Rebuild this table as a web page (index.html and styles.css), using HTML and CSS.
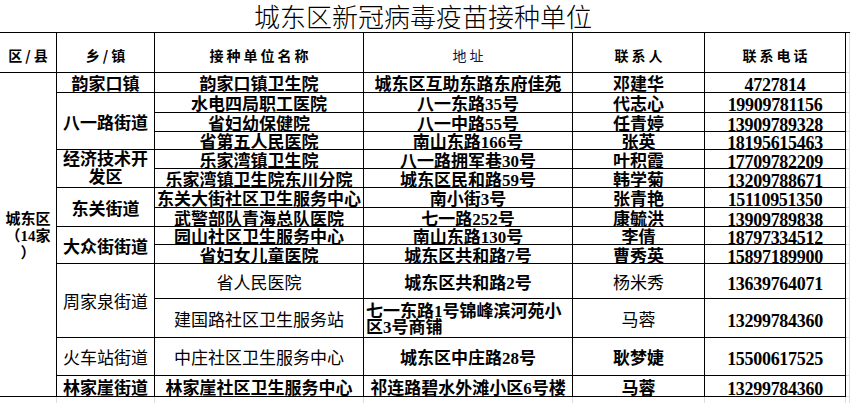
FILE: index.html
```html
<!DOCTYPE html>
<html lang="zh-CN">
<head>
<meta charset="utf-8">
<title>城东区新冠病毒疫苗接种单位</title>
<link rel="stylesheet" href="styles.css">
</head>
<body>
<div class="sheet">
  <div class="title"><span class="title-text">城东区新冠病毒疫苗接种单位</span></div>
  <div class="grid">
    <div class="c h">区/县</div>
    <div class="c h">乡/镇</div>
    <div class="c h">接种单位名称</div>
    <div class="c h hl">地址</div>
    <div class="c h">联系人</div>
    <div class="c h">联系电话</div>
    <div class="g"></div>

    <div class="c dist">城东区<br>（14家<br>）</div>

    <div class="c">韵家口镇</div>
    <div class="c">韵家口镇卫生院</div>
    <div class="c">城东区互助东路东府佳苑</div>
    <div class="c">邓建华</div>
    <div class="c ph">4727814</div>
    <div class="g"></div>

    <div class="c span3">八一路街道</div>
    <div class="c">水电四局职工医院</div>
    <div class="c">八一东路35号</div>
    <div class="c">代志心</div>
    <div class="c ph">19909781156</div>
    <div class="g"></div>

    <div class="c">省妇幼保健院</div>
    <div class="c">八一中路55号</div>
    <div class="c">任青婷</div>
    <div class="c ph">13909789328</div>
    <div class="g"></div>

    <div class="c">省第五人民医院</div>
    <div class="c">南山东路166号</div>
    <div class="c">张英</div>
    <div class="c ph">18195615463</div>
    <div class="g"></div>

    <div class="c span2 wrap2">经济技术开<br>发区</div>
    <div class="c">乐家湾镇卫生院</div>
    <div class="c">八一路拥军巷30号</div>
    <div class="c">叶积霞</div>
    <div class="c ph">17709782209</div>
    <div class="g"></div>

    <div class="c">乐家湾镇卫生院东川分院</div>
    <div class="c">城东区民和路59号</div>
    <div class="c">韩学菊</div>
    <div class="c ph">13209788671</div>
    <div class="g"></div>

    <div class="c span2">东关街道</div>
    <div class="c">东关大街社区卫生服务中心</div>
    <div class="c">南小街3号</div>
    <div class="c">张青艳</div>
    <div class="c ph">15110951350</div>
    <div class="g"></div>

    <div class="c">武警部队青海总队医院</div>
    <div class="c">七一路252号</div>
    <div class="c">康毓洪</div>
    <div class="c ph">13909789838</div>
    <div class="g"></div>

    <div class="c span2">大众街街道</div>
    <div class="c">园山社区卫生服务中心</div>
    <div class="c">南山东路130号</div>
    <div class="c">李倩</div>
    <div class="c ph">18797334512</div>
    <div class="g"></div>

    <div class="c">省妇女儿童医院</div>
    <div class="c">城东区共和路7号</div>
    <div class="c">曹秀英</div>
    <div class="c ph">15897189900</div>
    <div class="g"></div>

    <div class="c span2 lt">周家泉街道</div>
    <div class="c lt">省人民医院</div>
    <div class="c">城东区共和路2号</div>
    <div class="c lt">杨米秀</div>
    <div class="c ph">13639764071</div>
    <div class="g"></div>

    <div class="c lt">建国路社区卫生服务站</div>
    <div class="c wrapl">七一东路1号锦峰滨河苑小区3号商铺</div>
    <div class="c lt">马蓉</div>
    <div class="c ph">13299784360</div>
    <div class="g"></div>

    <div class="c lt">火车站街道</div>
    <div class="c lt">中庄社区卫生服务中心</div>
    <div class="c">城东区中庄路28号</div>
    <div class="c">耿梦婕</div>
    <div class="c ph">15500617525</div>
    <div class="g"></div>

    <div class="c">林家崖街道</div>
    <div class="c">林家崖社区卫生服务中心</div>
    <div class="c">祁连路碧水外滩小区6号楼</div>
    <div class="c">马蓉</div>
    <div class="c ph">13299784360</div>
    <div class="g"></div>

    <div class="gb"></div>
    <div class="gb"></div>
    <div class="gb"></div>
    <div class="gb"></div>
    <div class="gb"></div>
    <div class="gb"></div>
    <div class="gb"></div>
  </div>
</div>
</body>
</html>
```

FILE: styles.css
```css
html, body {
  margin: 0;
  padding: 0;
  background: #ffffff;
}

.sheet {
  width: 851px;
}

.title {
  width: 846px;
  height: 32px;
  padding-top: 3px;
  box-sizing: border-box;
  text-align: center;
  font-family: "Noto Sans CJK SC", sans-serif;
  font-weight: 300;
  font-size: 26px;
  line-height: 26px;
  color: #000;
}

.title-text {
  display: inline-block;
  line-height: 26px;
}

.grid {
  display: grid;
  grid-template-columns: 57px 98px 209px 209px 132px 141px 4px;
  grid-template-rows: 40px 20px 20px 19px 18px 19px 19px 20px 19px 18px 19px 35px 39px 38px 21px 6px;
  border-top: 1px solid #000;
  width: 850px;
}

.c {
  box-sizing: border-box;
  border-right: 1px solid #000;
  border-bottom: 1px solid #000;
  display: flex;
  align-items: center;
  justify-content: center;
  text-align: center;
  white-space: nowrap;
  font-family: "Liberation Serif", "Noto Sans CJK SC", serif;
  font-weight: 700;
  font-size: 17px;
  line-height: 18px;
  color: #000;
  padding-top: 5px;
}

.h {
  font-family: "Noto Sans CJK SC", sans-serif;
  font-size: 14px;
  letter-spacing: 3px;
  padding-left: 3px;
  padding-top: 4px;
}

.hl {
  font-weight: 400;
  color: #0c1840;
}

.dist {
  grid-row: span 14;
  font-size: 15px;
  line-height: 17px;
  padding-top: 4px;
}

.span3 {
  grid-row: span 3;
}

.span2 {
  grid-row: span 2;
}

.wrap2 {
  line-height: 18px;
  padding-top: 1px;
}

.wrapl {
  white-space: normal;
  text-align: left;
  justify-content: flex-start;
  line-height: 16px;
  padding-left: 2px;
  padding-top: 4px;
}

.lt {
  font-weight: 400;
}

.ph {
  font-size: 18px;
  letter-spacing: -0.3px;
}

.g {
  box-sizing: border-box;
  border-right: 1px solid #d8dde6;
  border-bottom: 1px solid #d8dde6;
}

.gb {
  box-sizing: border-box;
  border-right: 1px solid #d8dde6;
}
```
